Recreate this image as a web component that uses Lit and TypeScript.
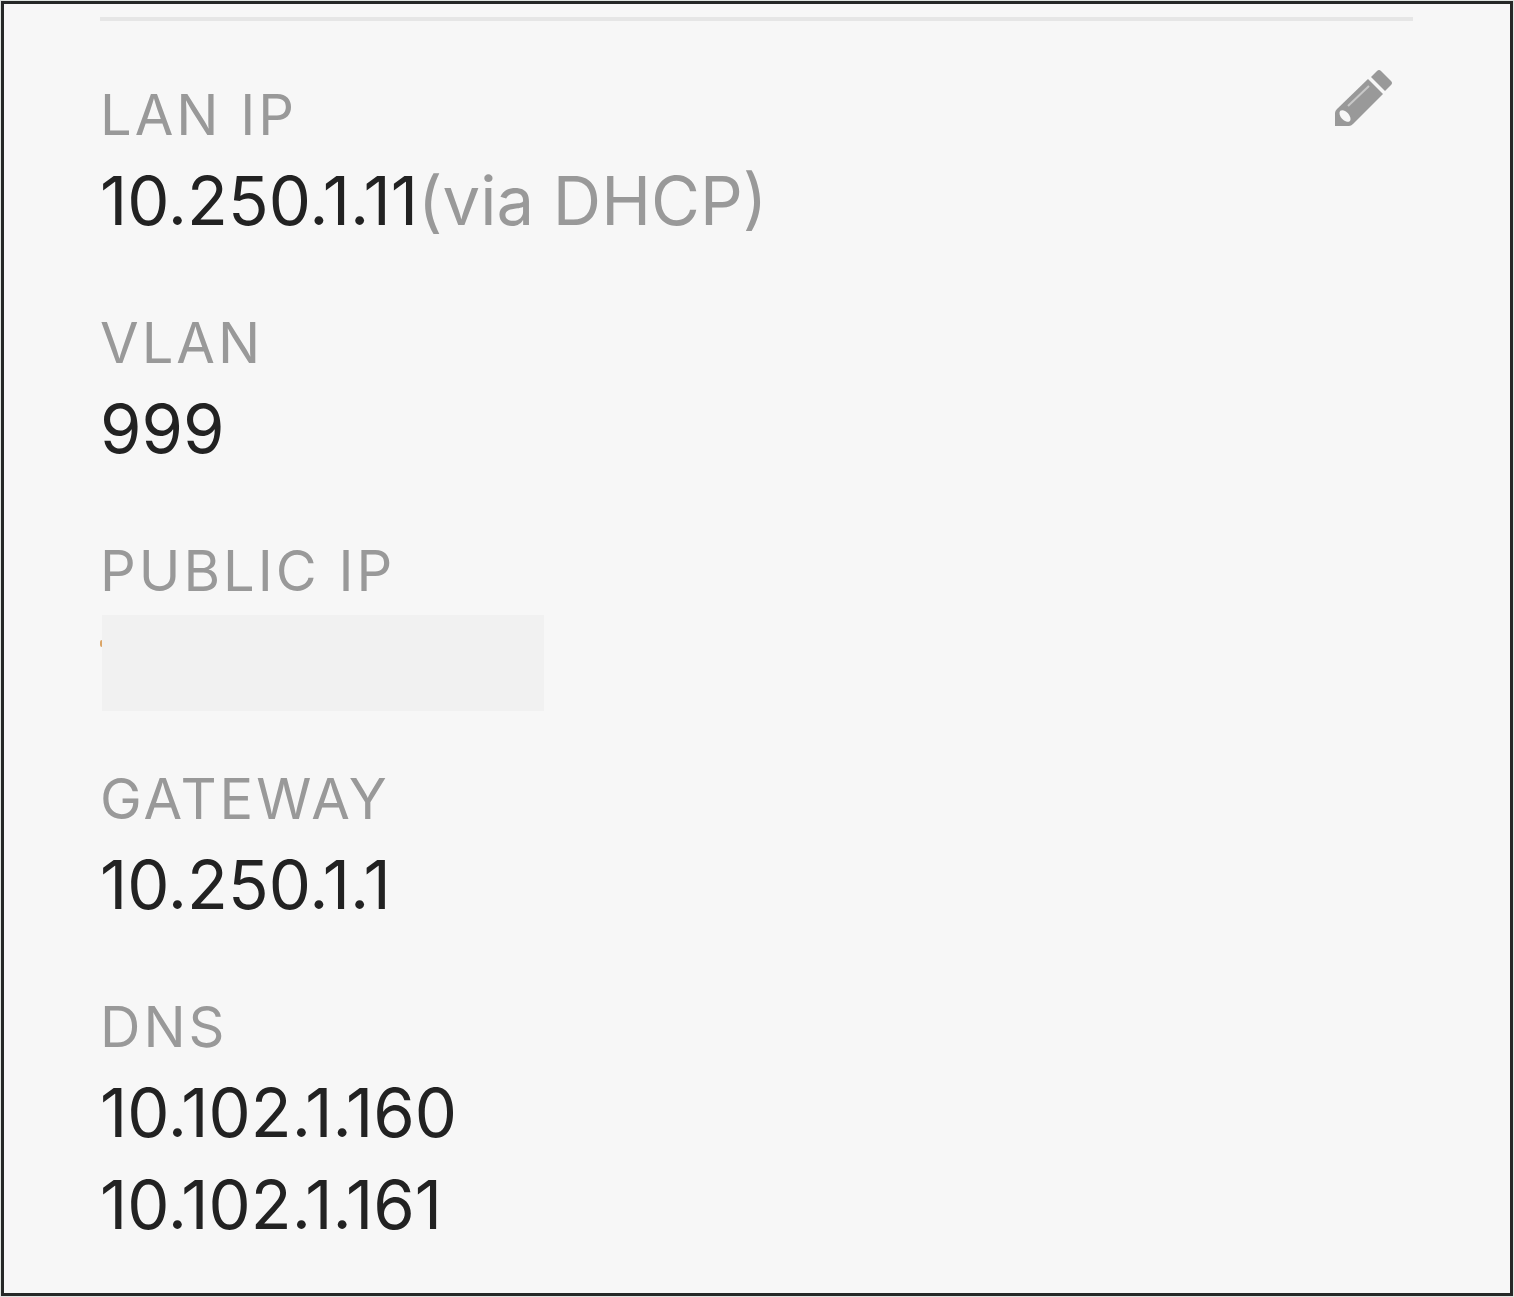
import {customElement, property} from "lit/decorators.js";
import {css, html, LitElement, nothing} from "lit";

@customElement('detail-field')
export class DetailField extends LitElement {

    static styles = css`
        :host {
            display: block;
        }

        dl, dt, dd {
            margin: 0;
        }

        dt {
            color: #999;
            font-size: 56px;
            line-height: 80px;
            letter-spacing: 3px;
        }

        dd {
            color: #222;
            font-size: 67px;
            line-height: 92px;
        }

        .note {
            color: #999;
        }

        /* taller than a line of text, the negative margin keeps the rows evenly spaced */
        .redacted {
            position: relative;
            width: 442px;
            height: 96px;
            margin: 4px 0 -8px 2px;
            background: #f1f1f1;
        }

        /* sliver of the covered value */
        .redacted::before {
            content: "";
            position: absolute;
            top: 25px;
            left: -2px;
            width: 2px;
            height: 7px;
            border-radius: 2px 0 0 2px;
            background: #dba567;
        }
    `;

    @property()
    label = '';

    @property({type: Array})
    values: string[] = [];

    @property()
    note = '';

    protected render() {
        return html`
            <dl>
                <dt>${this.label}</dt>
                ${this.values.map(value => html`
                    <dd>${value}${this.note ? html`<span class="note">${this.note}</span>` : nothing}</dd>
                `)}
                ${this.values.length ? nothing : html`<dd class="redacted"></dd>`}
            </dl>
        `;
    }
}

@customElement('app-root')
export class AppRoot extends LitElement {

    static styles = css`
        :host {
            display: block;
            box-sizing: border-box;
            min-height: 100vh;
            padding: 13px 97px 32px 96px;
            border: 4px solid #262827;
            outline: 1px solid #dfe4e1;
            outline-offset: -1px;
            background: #f7f7f7;
            font-family: Inter, "Liberation Sans", sans-serif;
        }

        .panel {
            display: flex;
            justify-content: space-between;
            align-items: flex-start;
            border-top: 4px solid #e6e6e6;
            padding-top: 48px;
        }

        .fields {
            display: grid;
            gap: 56px;
            padding-top: 6px;
        }

        button {
            margin-right: 20px;
            padding: 0;
            border: 0;
            background: none;
            color: #999;
            cursor: pointer;
        }

        svg {
            display: block;
            width: 60px;
            height: 60px;
        }

        .shine {
            fill: none;
            stroke: #c8c8c8;
            stroke-width: 2;
        }

        .tip {
            fill: #f7f7f7;
        }
    `;

    protected render() {
        return html`
            <section class="panel">
                <div class="fields">
                    <detail-field label="LAN IP" .values=${['10.250.1.11']} note="(via DHCP)"></detail-field>
                    <detail-field label="VLAN" .values=${['999']}></detail-field>
                    <detail-field label="PUBLIC IP"></detail-field>
                    <detail-field label="GATEWAY" .values=${['10.250.1.1']}></detail-field>
                    <detail-field label="DNS" .values=${['10.102.1.160', '10.102.1.161']}></detail-field>
                </div>
                <button type="button" aria-label="Edit">
                    <svg viewBox="0 0 60 60" fill="currentColor">
                        <path d="M2 57V44Q2 42 4 40L35 10L50 25L20 55Q18 57 16 57Z"/>
                        <path d="M38 8L44 2Q46 0 48 2L58 12Q60 14 58 16L52 22Z"/>
                        <path class="shine" d="M15 37L36 17"/>
                        <ellipse class="tip" cx="12" cy="47" rx="7" ry="4" transform="rotate(48 12 47)"/>
                    </svg>
                </button>
            </section>
        `;
    }
}
